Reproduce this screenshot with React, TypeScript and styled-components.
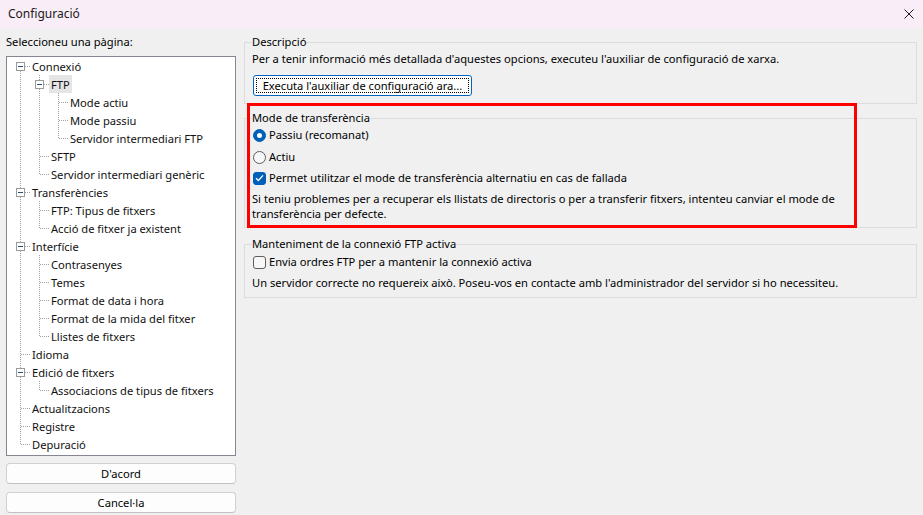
import React from "react";
import styled, { createGlobalStyle } from "styled-components";

const Global = createGlobalStyle`
  html, body { margin: 0; padding: 0; }
  body {
    background: #f0f0f0;
    font-family: "Noto Sans", "Liberation Sans", sans-serif;
    font-size: 11.15px;
    color: #000;
  }
`;

const Window = styled.div`
  width: 923px;
  height: 515px;
  display: flex;
  flex-direction: column;
  background: #f0f0f0;
  overflow: hidden;
`;

const TitleBar = styled.div`
  height: 28px;
  flex: none;
  display: flex;
  align-items: center;
  justify-content: space-between;
  padding: 0 9px 0 8px;
  background: #f9edf7;
  font-size: 12px;
  line-height: 16px;
  color: #1a1a1a;
`;

const CloseIcon = styled.svg`
  width: 10px;
  height: 10px;
  margin-top: -1px;
`;

const Body = styled.div`
  flex: 1;
  display: grid;
  grid-template-columns: 230px 1fr;
  column-gap: 8px;
  padding: 6px 6px 0 6px;
`;

const LeftCol = styled.div`
  display: flex;
  flex-direction: column;
`;

const Label = styled.div`
  line-height: 16px;
  white-space: nowrap;
`;

const TreeBox = styled.div`
  margin-top: 6px;
  height: 400px;
  box-sizing: border-box;
  border: 1px solid #828790;
  background: #fff;
`;

const TreeRow = styled.div`
  height: 18px;
  display: flex;
  align-items: center;
  padding-left: 4px;
`;

const TreeLabel = styled.span<{ $selected?: boolean }>`
  padding: 1px 2px 0 2px;
  box-sizing: border-box;
  height: 18px;
  line-height: 17px;
  white-space: nowrap;
  background: ${(p) => (p.$selected ? "#e5e5e5" : "transparent")};
  color: #111;
`;

const ButtonCol = styled.div`
  margin-top: 7px;
  display: flex;
  flex-direction: column;
  gap: 8px;
`;

const PushButton = styled.button`
  height: 21px;
  box-sizing: border-box;
  border: 1px solid #d0d0d0;
  border-bottom-color: #c0c0c0;
  border-radius: 4px;
  background: #fdfdfd;
  font: inherit;
  color: #000;
  padding: 0;
  line-height: 18px;
`;

const RightCol = styled.div`
  position: relative;
  display: flex;
  flex-direction: column;
`;

const Group = styled.fieldset<{ $mt?: number; $pb?: number }>`
  margin: ${(p) => p.$mt ?? 0}px 0 0 0;
  border: 1px solid #dcdcdc;
  padding: 0 8px ${(p) => p.$pb ?? 6}px 7px;
  min-width: 0;
`;

const Legend = styled.legend`
  padding: 0;
  line-height: 16px;
  white-space: nowrap;
`;

const Text = styled.div<{ $mt?: number }>`
  margin-top: ${(p) => p.$mt ?? 0}px;
  line-height: 16px;
  white-space: nowrap;
`;

const Para = styled.div<{ $mt?: number }>`
  margin-top: ${(p) => p.$mt ?? 0}px;
  line-height: 15px;
  max-width: 596px;
`;

const WizardButton = styled.button`
  margin-top: 8px;
  margin-left: 1px;
  align-self: flex-start;
  height: 21px;
  width: 219px;
  box-sizing: border-box;
  border: 1px solid #0067c0;
  border-radius: 3px;
  background: #fdfdfd;
  font: inherit;
  color: #000;
  padding: 0;
  line-height: 17px;
  outline: 1px dotted #000;
  outline-offset: -4px;
`;

const GroupInner = styled.div`
  display: flex;
  flex-direction: column;
`;

const Option = styled.label<{ $mt?: number }>`
  margin-top: ${(p) => p.$mt ?? 0}px;
  display: flex;
  align-items: center;
  height: 16px;
  line-height: 16px;
  white-space: nowrap;
`;

const RadioDot = styled.span<{ $on?: boolean }>`
  width: 13px;
  height: 13px;
  box-sizing: border-box;
  margin: 0 3px 0 1px;
  border-radius: 50%;
  flex: none;
  display: flex;
  align-items: center;
  justify-content: center;
  background: ${(p) => (p.$on ? "#005fb8" : "#f7f7f7")};
  border: 1px solid ${(p) => (p.$on ? "#005fb8" : "#5d5d5d")};
  &::after {
    content: "";
    display: ${(p) => (p.$on ? "block" : "none")};
    width: 5px;
    height: 5px;
    border-radius: 50%;
    background: #fff;
  }
`;

const CheckBox = styled.span<{ $on?: boolean }>`
  width: 13px;
  height: 13px;
  box-sizing: border-box;
  margin: 0 3px 0 1px;
  border-radius: 3px;
  flex: none;
  display: flex;
  align-items: center;
  justify-content: center;
  background: ${(p) => (p.$on ? "#005fb8" : "#f7f7f7")};
  border: 1px solid ${(p) => (p.$on ? "#005fb8" : "#5d5d5d")};
`;

const Highlight = styled.div`
  position: absolute;
  left: 3px;
  top: 69px;
  width: 610px;
  height: 125px;
  box-sizing: border-box;
  border: 3px solid #ff0000;
  pointer-events: none;
`;

type Node = { label: string; depth: number; exp?: boolean; selected?: boolean };

const nodes: Node[] = [
  { label: "Connexió", depth: 0, exp: true },
  { label: "FTP", depth: 1, exp: true, selected: true },
  { label: "Mode actiu", depth: 2 },
  { label: "Mode passiu", depth: 2 },
  { label: "Servidor intermediari FTP", depth: 2 },
  { label: "SFTP", depth: 1 },
  { label: "Servidor intermediari genèric", depth: 1 },
  { label: "Transferències", depth: 0, exp: true },
  { label: "FTP: Tipus de fitxers", depth: 1 },
  { label: "Acció de fitxer ja existent", depth: 1 },
  { label: "Interfície", depth: 0, exp: true },
  { label: "Contrasenyes", depth: 1 },
  { label: "Temes", depth: 1 },
  { label: "Format de data i hora", depth: 1 },
  { label: "Format de la mida del fitxer", depth: 1 },
  { label: "Llistes de fitxers", depth: 1 },
  { label: "Idioma", depth: 0 },
  { label: "Edició de fitxers", depth: 0, exp: true },
  { label: "Associacions de tipus de fitxers", depth: 1 },
  { label: "Actualitzacions", depth: 0 },
  { label: "Registre", depth: 0 },
  { label: "Depuració", depth: 0 },
];

function isLast(i: number): boolean {
  const d = nodes[i].depth;
  for (let j = i + 1; j < nodes.length; j++) {
    if (nodes[j].depth < d) return true;
    if (nodes[j].depth === d) return false;
  }
  return true;
}

function ancestorContinues(i: number, a: number): boolean {
  for (let j = i; j >= 0; j--) {
    if (nodes[j].depth === a) return !isLast(j);
  }
  return false;
}

const DOT = "#a0a0a0";

function GuideCell({ kind, h, box }: { kind: "none" | "full" | "top" | "bottom"; h?: boolean; box?: boolean }) {
  return (
    <svg width={19} height={18} style={{ flex: "none", display: "block" }} shapeRendering="crispEdges">
      {kind === "full" && <line x1={9.5} y1={0} x2={9.5} y2={18} stroke={DOT} strokeDasharray="1 1" />}
      {kind === "top" && <line x1={9.5} y1={0} x2={9.5} y2={10} stroke={DOT} strokeDasharray="1 1" />}
      {kind === "bottom" && <line x1={9.5} y1={10} x2={9.5} y2={18} stroke={DOT} strokeDasharray="1 1" />}
      {h && <line x1={box ? 14 : 10} y1={9.5} x2={19} y2={9.5} stroke={DOT} strokeDasharray="1 1" />}
      {box && (
        <>
          <rect x={5.5} y={5.5} width={8} height={8} fill="#fff" stroke="#9a9a9a" />
          <line x1={7} y1={9.5} x2={12} y2={9.5} stroke="#2b4b7a" />
        </>
      )}
    </svg>
  );
}

function Tree() {
  return (
    <TreeBox>
      {nodes.map((n, i) => {
        const cells: React.ReactNode[] = [];
        for (let a = 0; a < n.depth; a++) {
          cells.push(<GuideCell key={a} kind={ancestorContinues(i, a) ? "full" : "none"} />);
        }
        const last = isLast(i);
        let kind: "full" | "top" | "bottom" = last ? "top" : "full";
        if (i === 0) kind = "bottom";
        cells.push(<GuideCell key="own" kind={kind} h box={n.exp} />);
        return (
          <TreeRow key={i}>
            {cells}
            <TreeLabel $selected={n.selected}>{n.label}</TreeLabel>
          </TreeRow>
        );
      })}
    </TreeBox>
  );
}

const CheckMark = () => (
  <svg width="9" height="8" viewBox="0 0 9 8">
    <path d="M1 4.2 L3.4 6.5 L8 1.4" fill="none" stroke="#fff" strokeWidth="1.3" />
  </svg>
);

export default function App() {
  return (
    <Window>
      <Global />
      <TitleBar>
        <span>Configuració</span>
        <CloseIcon viewBox="0 0 10 10">
          <path d="M0.5 0.5 L9.5 9.5 M9.5 0.5 L0.5 9.5" stroke="#1a1a1a" strokeWidth="1" />
        </CloseIcon>
      </TitleBar>
      <Body>
        <LeftCol>
          <Label>Seleccioneu una pàgina:</Label>
          <Tree />
          <ButtonCol>
            <PushButton>D'acord</PushButton>
            <PushButton>Cancel·la</PushButton>
          </ButtonCol>
        </LeftCol>
        <RightCol>
          <Group $pb={7}>
            <Legend>Descripció</Legend>
            <GroupInner>
              <Text $mt={1}>
                Per a tenir informació més detallada d'aquestes opcions, executeu l'auxiliar de configuració de xarxa.
              </Text>
              <WizardButton>Executa l'auxiliar de configuració ara...</WizardButton>
            </GroupInner>
          </Group>
          <Group $mt={6} $pb={6}>
            <Legend>Mode de transferència</Legend>
            <GroupInner>
              <Option $mt={1}>
                <RadioDot $on />
                Passiu (recomanat)
              </Option>
              <Option $mt={6}>
                <RadioDot />
                Actiu
              </Option>
              <Option $mt={5}>
                <CheckBox $on>
                  <CheckMark />
                </CheckBox>
                Permet utilitzar el mode de transferència alternatiu en cas de fallada
              </Option>
              <Para $mt={5}>
                Si teniu problemes per a recuperar els llistats de directoris o per a transferir fitxers, intenteu canviar el
                mode de transferència per defecte.
              </Para>
            </GroupInner>
          </Group>
          <Group $mt={8} $pb={6}>
            <Legend>Manteniment de la connexió FTP activa</Legend>
            <GroupInner>
              <Option $mt={2}>
                <CheckBox />
                Envia ordres FTP per a mantenir la connexió activa
              </Option>
              <Text $mt={5}>
                Un servidor correcte no requereix això. Poseu-vos en contacte amb l'administrador del servidor si ho necessiteu.
              </Text>
            </GroupInner>
          </Group>
          <Highlight />
        </RightCol>
      </Body>
    </Window>
  );
}
